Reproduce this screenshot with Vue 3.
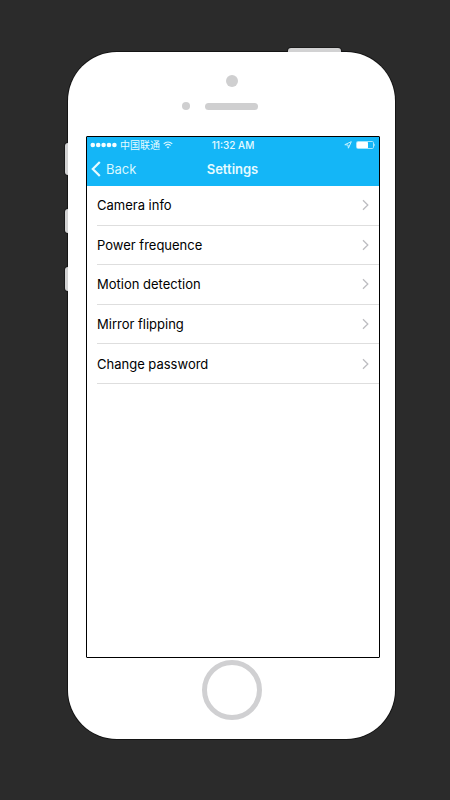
<script setup>
const items = [
  'Camera info',
  'Power frequence',
  'Motion detection',
  'Mirror flipping',
  'Change password',
]
</script>

<template>
  <main class="stage">
    <div class="phone">
      <span class="side-key mute"></span>
      <span class="side-key volume-up"></span>
      <span class="side-key volume-down"></span>
      <span class="power-key"></span>

      <div class="body">
        <div class="earpiece">
          <span class="camera"></span>
          <div class="speaker-row">
            <span class="sensor"></span>
            <span class="speaker"></span>
          </div>
        </div>

        <section class="screen">
          <header class="top">
            <div class="status">
              <div class="carrier">
                <svg class="signal" viewBox="0 0 27 6" aria-hidden="true">
                  <circle v-for="n in 5" :key="n" :cx="n * 5.4 - 2.6" cy="3" r="2.3" />
                </svg>
                <span class="carrier-name">中国联通</span>
                <svg class="wifi" viewBox="0 0 10 8" aria-hidden="true">
                  <path d="M0.7 2.9C3.2 0.5 6.8 0.5 9.3 2.9M2.4 4.6C3.9 3.2 6.1 3.2 7.6 4.6" />
                  <path class="solid" d="M5 7.6L3.5 6C4.3 5.2 5.7 5.2 6.5 6Z" />
                </svg>
              </div>
              <span class="clock">11:32 AM</span>
              <div class="power">
                <svg class="location" viewBox="0 0 8 8" aria-hidden="true">
                  <path d="M7.3 0.7L0.8 3.7L4 4L4.4 7.2Z" />
                </svg>
                <svg class="battery" viewBox="0 0 20 8" aria-hidden="true">
                  <rect class="case" x="0.5" y="0.5" width="17" height="7" rx="1.2" />
                  <rect class="charge" x="1" y="1" width="11" height="6" rx="0.6" />
                  <path class="charge" d="M18.4 2.6Q19.6 4 18.4 5.4Z" />
                </svg>
              </div>
            </div>

            <nav class="bar">
              <button class="back" type="button">
                <svg class="back-arrow" viewBox="0 0 10 16" aria-hidden="true">
                  <path d="M8.8 1L1.8 8L8.8 15" />
                </svg>
                <span>Back</span>
              </button>
              <h1 class="title">Settings</h1>
            </nav>
          </header>

          <ul class="list">
            <li v-for="item in items" :key="item" class="item">
              <button class="row" type="button">
                <span>{{ item }}</span>
                <svg class="chevron" viewBox="0 0 7 12" aria-hidden="true">
                  <path d="M1 1.3L5.8 6L1 10.7" />
                </svg>
              </button>
            </li>
          </ul>
        </section>

        <div class="home-area">
          <button class="home" type="button" aria-label="Home"></button>
        </div>
      </div>
    </div>
  </main>
</template>

<style>
body {
  margin: 0;
  background: #2b2b2b;
}
</style>

<style scoped>
.stage {
  box-sizing: border-box;
  min-height: 100vh;
  padding: 52px 55px 61px 68px;
  display: flex;
  background: #2b2b2b;
  font-family: Inter, "Noto Sans CJK SC", sans-serif;
}

.phone {
  position: relative;
  flex: 1;
  display: flex;
  border-radius: 49px;
  box-shadow: 0 0 0 1px #141414;
}

.body {
  position: relative;
  box-sizing: border-box;
  flex: 1;
  display: flex;
  flex-direction: column;
  padding: 0 15px 0 18px;
  border-radius: 49px;
  background: #fff;
}

.side-key,
.power-key {
  position: absolute;
  background: #d2d2d3;
  box-shadow: 0 0 0 1px #1c1c1c;
}

.side-key {
  left: -3px;
  width: 8px;
  height: 24px;
  border-radius: 3px;
}

.mute {
  top: 91px;
  height: 32px;
}

.volume-up {
  top: 157px;
}

.volume-down {
  top: 215px;
}

.power-key {
  top: -4px;
  right: 54px;
  width: 53px;
  height: 10px;
  border-radius: 3px;
}

.earpiece {
  box-sizing: border-box;
  height: 84px;
  padding: 23px 3px 0 0;
  display: flex;
  flex-direction: column;
  align-items: center;
  gap: 15px;
}

.camera {
  width: 12px;
  height: 12px;
  border-radius: 50%;
  background: #cfcfd0;
}

.speaker-row {
  display: grid;
  grid-template-columns: 1fr 53px 1fr;
  align-items: center;
  column-gap: 15px;
  width: 100%;
}

.sensor {
  justify-self: end;
  width: 8px;
  height: 8px;
  border-radius: 50%;
  background: #cfcfd0;
}

.speaker {
  height: 7px;
  border-radius: 4px;
  background: #cfcfd0;
}

.screen {
  flex: 1;
  border: 1px solid #000;
  border-radius: 1px;
  background: #fff;
}

.top {
  background: #14b6f7;
  color: #e6fbff;
}

.status {
  display: grid;
  grid-template-columns: 1fr auto 1fr;
  align-items: center;
  height: 15px;
  padding: 0 3px;
}

.carrier,
.power {
  display: flex;
  align-items: center;
  gap: 3px;
}

.power {
  justify-content: flex-end;
  gap: 4px;
}

.signal {
  width: 27px;
  height: 6px;
  fill: #f4fdff;
}

.carrier-name,
.clock {
  font-size: 10px;
  line-height: 14px;
}

.wifi {
  width: 10px;
  height: 8px;
  fill: none;
  stroke: #d8f7ff;
  stroke-width: 1.2;
}

.wifi .solid {
  fill: #d8f7ff;
  stroke: none;
}

.clock {
  font-weight: 500;
}

.location {
  width: 8px;
  height: 8px;
  fill: none;
  stroke: #c4f1ff;
  stroke-width: 1;
  stroke-linejoin: round;
}

.battery {
  width: 20px;
  height: 8px;
}

.case {
  fill: none;
  stroke: #a6e6fc;
  stroke-width: 1;
}

.charge {
  fill: #fff;
}

.bar {
  display: grid;
  grid-template-columns: 1fr auto 1fr;
  align-items: center;
  height: 34px;
  padding: 0 5px 0 4px;
}

.back {
  justify-self: start;
  display: flex;
  align-items: center;
  gap: 5px;
  padding: 0;
  border: 0;
  background: none;
  color: #d8f8ff;
  font: inherit;
  font-size: 13px;
  line-height: 20px;
}

.back-arrow {
  width: 10px;
  height: 16px;
  fill: none;
  stroke: #e6fbff;
  stroke-width: 2.2;
}

.title {
  margin: 0;
  font-size: 13px;
  font-weight: 600;
  line-height: 20px;
}

.list {
  display: grid;
  grid-template-rows: repeat(5, 1fr);
  height: 198px;
  margin: 0;
  padding: 0 0 0 10px;
  list-style: none;
}

.item {
  display: flex;
  border-bottom: 1px solid #dedede;
}

.row {
  flex: 1;
  display: flex;
  align-items: center;
  justify-content: space-between;
  padding: 0 10px 0 0;
  border: 0;
  background: none;
  color: #000;
  font: inherit;
  font-size: 13px;
  line-height: 20px;
  text-align: left;
}

.chevron {
  width: 7px;
  height: 12px;
  fill: none;
  stroke: #bdbdc1;
  stroke-width: 1.3;
}

.home-area {
  box-sizing: border-box;
  height: 81px;
  padding: 2px 3px 0 0;
  display: flex;
  justify-content: center;
  align-items: flex-start;
}

.home {
  box-sizing: border-box;
  width: 60px;
  height: 60px;
  padding: 0;
  border: 5px solid #d0d0d2;
  border-radius: 50%;
  background: #fff;
}
</style>
